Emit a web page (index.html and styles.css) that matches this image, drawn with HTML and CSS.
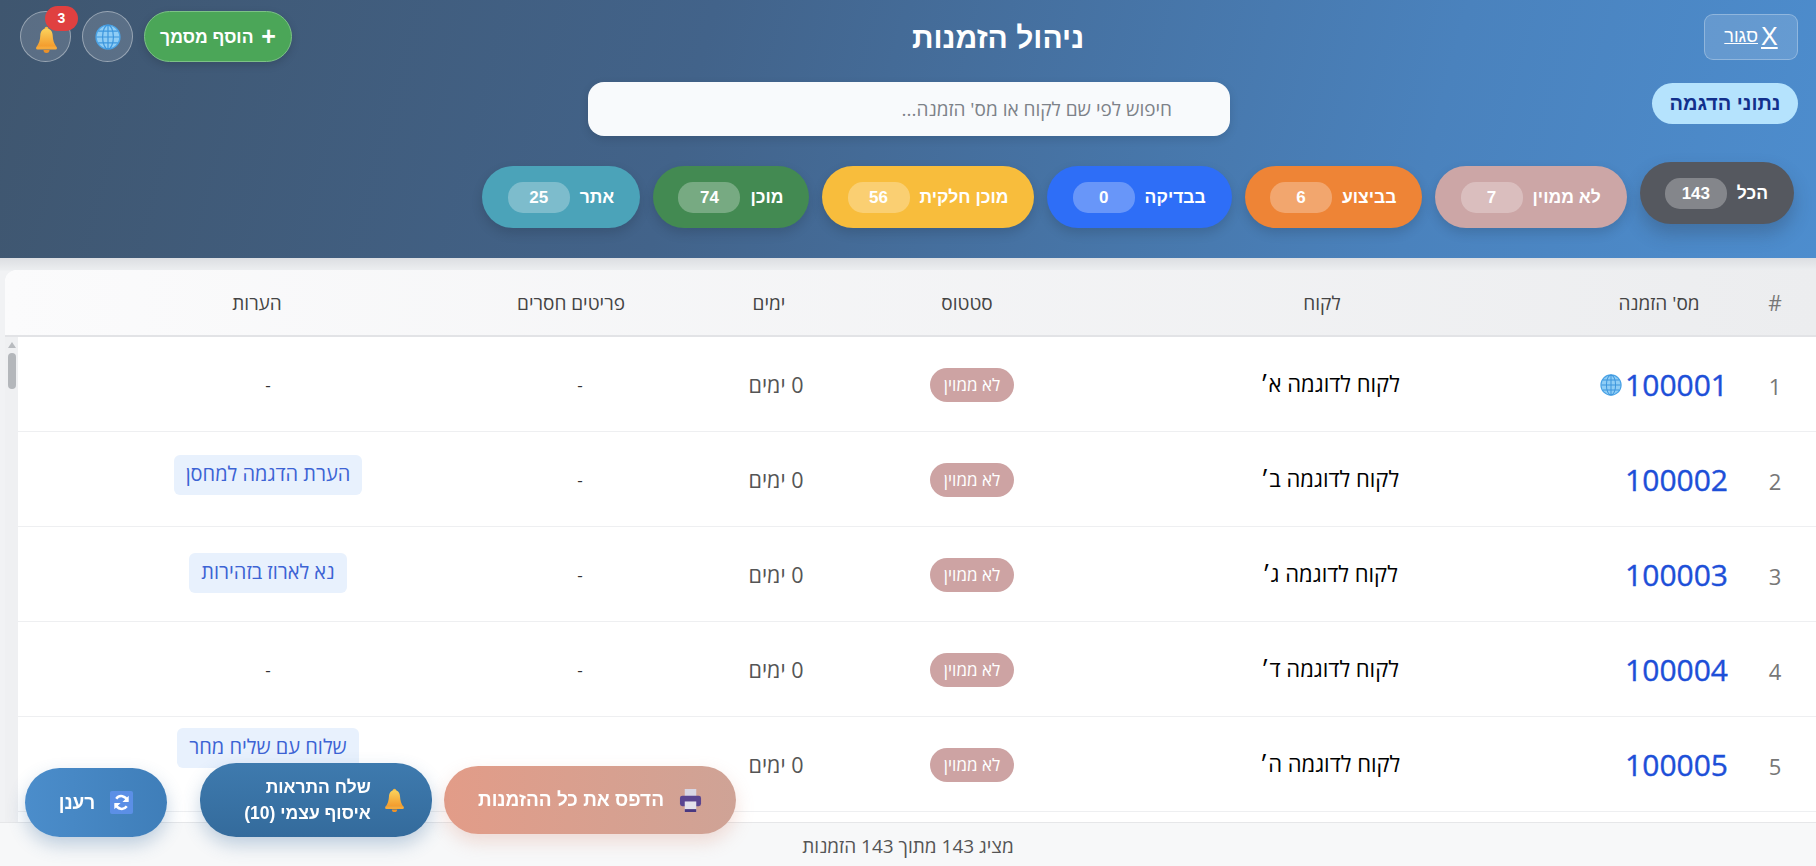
FILE: index.html
```html
<!DOCTYPE html>
<html lang="he" dir="rtl">
  <head>
    <meta charset="UTF-8" />
    <meta name="viewport" content="width=device-width, initial-scale=1.0" />
    <title>ניהול הזמנות</title>
    <link rel="stylesheet" href="styles.css">
  </head>
  <body>
    <svg class="defs" width="0" height="0">
      <defs>
        <linearGradient id="bellFill" x1="0" y1="0" x2="0" y2="1">
          <stop offset="0" stop-color="#fbd25c" />
          <stop offset="1" stop-color="#f39a2c" />
        </linearGradient>
        <symbol id="bell" viewBox="0 0 24 28">
          <circle cx="12" cy="2.6" r="1.9" fill="#f5b642" />
          <path d="M12 2.5c-4 0-6 3-6.2 7-.2 4.500-1.300 8-3.800 11.500h20c-2.500-3.500-3.600-7-3.800-11.500-.2-4-2.200-7-6.200-7z" fill="url(#bellFill)" />
          <rect x="1.500" y="20.500" width="21" height="3" rx="1.500" fill="#f6a93a" />
          <path d="M9 24h6a3 3 0 0 1-6 0z" fill="#ec9128" />
        </symbol>
        <symbol id="globe" viewBox="0 0 24 24">
          <circle cx="12" cy="12" r="11" fill="#8fcdf5" stroke="#4aa3e6" stroke-width="1.300" />
          <g fill="none" stroke="#3d96dd" stroke-width="1.100">
            <ellipse cx="12" cy="12" rx="5" ry="11" />
            <path d="M12 1v22M1.500 12h21M3 6.500h18M3 17.500h18" />
          </g>
        </symbol>
      </defs>
    </svg>

    <header class="top">
      <div class="top-row">
        <a class="close-link" href="#"><span class="close-x">X</span> סגור</a>
        <h1>ניהול הזמנות</h1>
        <div class="top-actions">
          <button class="add-btn"><span class="plus">+</span> הוסף מסמך</button>
          <button class="round-btn"><svg class="globe-big"><use href="#globe" /></svg></button>
          <button class="round-btn bell-btn">
            <svg class="bell-big"><use href="#bell" /></svg>
            <span class="badge">3</span>
          </button>
        </div>
      </div>

      <div class="search-row">
        <span class="demo-tag">נתוני הדגמה</span>
        <input class="search" type="text" placeholder="חיפוש לפי שם לקוח או מס' הזמנה..." />
      </div>

      <nav class="filters">
        <button class="chip chip-all">הכל <span class="count">143</span></button>
        <button class="chip chip-unsorted">לא ממוין <span class="count">7</span></button>
        <button class="chip chip-progress">בביצוע <span class="count">6</span></button>
        <button class="chip chip-review">בבדיקה <span class="count">0</span></button>
        <button class="chip chip-partial">מוכן חלקית <span class="count">56</span></button>
        <button class="chip chip-ready">מוכן <span class="count">74</span></button>
        <button class="chip chip-site">אתר <span class="count">25</span></button>
      </nav>
    </header>

    <main class="panel">
      <div class="card">
        <div class="head-row">
          <div class="c-num">#</div>
          <div>מס' הזמנה</div>
          <div>לקוח</div>
          <div>סטטוס</div>
          <div>ימים</div>
          <div>פריטים חסרים</div>
          <div class="c-notes">הערות</div>
        </div>

        <div class="body-wrap">
          <div class="rows">
            <article class="row">
              <div class="num">1</div>
              <div class="order">100001 <svg class="globe-small"><use href="#globe" /></svg></div>
              <div class="client">לקוח לדוגמה א׳</div>
              <div class="status-cell"><span class="status">לא ממוין</span></div>
              <div class="days">0 ימים</div>
              <div class="dash">-</div>
              <div class="c-notes dash">-</div>
            </article>
            <article class="row">
              <div class="num">2</div>
              <div class="order">100002</div>
              <div class="client">לקוח לדוגמה ב׳</div>
              <div class="status-cell"><span class="status">לא ממוין</span></div>
              <div class="days">0 ימים</div>
              <div class="dash">-</div>
              <div class="c-notes"><span class="note">הערת הדגמה למחסן</span></div>
            </article>
            <article class="row">
              <div class="num">3</div>
              <div class="order">100003</div>
              <div class="client">לקוח לדוגמה ג׳</div>
              <div class="status-cell"><span class="status">לא ממוין</span></div>
              <div class="days">0 ימים</div>
              <div class="dash">-</div>
              <div class="c-notes"><span class="note note-low">נא לארוז בזהירות</span></div>
            </article>
            <article class="row">
              <div class="num">4</div>
              <div class="order">100004</div>
              <div class="client">לקוח לדוגמה ד׳</div>
              <div class="status-cell"><span class="status">לא ממוין</span></div>
              <div class="days">0 ימים</div>
              <div class="dash">-</div>
              <div class="c-notes dash">-</div>
            </article>
            <article class="row">
              <div class="num">5</div>
              <div class="order">100005</div>
              <div class="client">לקוח לדוגמה ה׳</div>
              <div class="status-cell"><span class="status">לא ממוין</span></div>
              <div class="days">0 ימים</div>
              <div></div>
              <div class="c-notes"><span class="note note-high">שלוח עם שליח מחר</span></div>
            </article>
          </div>
          <div class="scrollbar">
            <span class="scroll-arrow"></span>
            <span class="scroll-thumb"></span>
          </div>
        </div>
      </div>
    </main>

    <footer class="count-bar">מציג 143 מתוך 143 הזמנות</footer>

    <div class="floating">
      <button class="fab fab-print">
        <svg class="fab-icon" viewBox="0 0 24 26">
          <rect x="6" y="1" width="12" height="8" fill="#d9d6e4" />
          <rect x="1" y="8" width="22" height="11" rx="2.500" fill="#5b4590" />
          <rect x="6" y="14" width="12" height="11" fill="#e4e1ec" />
          <rect x="6" y="22" width="12" height="3" fill="#4a3880" />
        </svg>
        הדפס את כל ההזמנות
      </button>
      <button class="fab fab-notify">
        <svg class="fab-icon"><use href="#bell" /></svg>
        <span class="fab-lines">שלח התראות<br />איסוף עצמי (10)</span>
      </button>
      <button class="fab fab-refresh">
        <svg class="fab-icon" viewBox="0 0 24 24">
          <rect width="24" height="24" rx="2" fill="#5b8fe6" />
          <g fill="none" stroke="#fff" stroke-width="2.600">
            <path d="M18 10a6.500 6.500 0 0 0-11.500-2" />
            <path d="M6 14a6.500 6.500 0 0 0 11.500 2" />
          </g>
          <path d="M19.500 5v6.500h-6.500z M4.500 19v-6.500h6.500z" fill="#fff" />
        </svg>
        רענן
      </button>
    </div>
  </body>
</html>
```

FILE: styles.css
```css
* {
  box-sizing: border-box;
}

html,
body {
  height: 100%;
}

body {
  margin: 0;
  height: 100vh;
  overflow: hidden;
  display: flex;
  flex-direction: column;
  font-family: "Open Sans", "Liberation Sans", sans-serif;
  background-color: #f1f2f4;
  color: #333;
}

button {
  font-family: inherit;
  border: none;
  cursor: pointer;
}

.defs {
  position: absolute;
}

/* header */
.top {
  height: 258px;
  flex-shrink: 0;
  padding: 11px 18px 0 20px;
  background: linear-gradient(105deg, #3f566f 0%, #42638a 38%, #4a82bd 78%, #4d8dce 100%);
  font-family: "Liberation Sans", sans-serif;
}

.top-row {
  display: flex;
  justify-content: space-between;
  align-items: center;
  height: 51px;
}

.close-link {
  width: 94px;
  height: 46px;
  display: flex;
  align-items: center;
  justify-content: center;
  gap: 3px;
  color: #fff;
  font-size: 18px;
  background-color: rgba(255, 255, 255, 0.14);
  border: 1px solid rgba(255, 255, 255, 0.28);
  border-radius: 9px;
}

.close-x {
  font-size: 25px;
  line-height: 23px;
}

h1 {
  margin: 0;
  padding-top: 3px;
  color: #fff;
  font-size: 30px;
  font-weight: 700;
}

.top-actions {
  display: flex;
  align-items: center;
  gap: 11px;
}

.add-btn {
  width: 148px;
  height: 51px;
  padding-top: 2px;
  color: #fff;
  font-size: 17.5px;
  font-weight: 700;
  background-color: #4ba658;
  border: 1px solid #7cc286;
  border-radius: 26px;
  box-shadow: 0 3px 8px rgba(0, 0, 0, 0.15);
}

.plus {
  font-size: 25px;
  line-height: 18px;
  vertical-align: -2px;
  margin-left: 3px;
}

.round-btn {
  position: relative;
  width: 51px;
  height: 51px;
  padding: 0;
  display: flex;
  align-items: center;
  justify-content: center;
  background-color: rgba(255, 255, 255, 0.14);
  border: 1px solid rgba(255, 255, 255, 0.38);
  border-radius: 50%;
}

.globe-big {
  width: 26px;
  height: 26px;
}

.bell-big {
  width: 25px;
  height: 28px;
  margin-top: 7px;
  margin-right: -1px;
}

.badge {
  position: absolute;
  top: -6px;
  left: 24px;
  width: 33px;
  height: 25px;
  line-height: 25px;
  text-align: center;
  color: #fff;
  font-size: 14px;
  font-weight: 700;
  background-color: #e04040;
  border-radius: 13px;
}

.search-row {
  display: grid;
  grid-template-columns: 1fr 642px 1fr;
  margin-top: 20px;
}

.search-row .demo-tag {
  grid-column: 1;
  justify-self: start;
  align-self: start;
  margin-top: 1px;
  width: 146px;
  height: 41px;
  line-height: 41px;
  text-align: center;
  color: #12308c;
  font-size: 20px;
  font-weight: 700;
  background-color: #b5e3fd;
  border-radius: 21px;
}

.search {
  grid-column: 2;
  height: 54px;
  padding: 0 58px;
  border: none;
  border-radius: 16px;
  background-color: #f8fafc;
  font-family: "Open Sans", "Liberation Sans", sans-serif;
  font-size: 19px;
  box-shadow: 0 3px 10px rgba(0, 0, 0, 0.12);
}

.search::placeholder {
  color: #7d8289;
}

.filters {
  display: flex;
  align-items: flex-start;
  gap: 13px;
  margin: 26px 4px 0 0;
}

.chip {
  height: 62px;
  margin-top: 4px;
  padding: 0 26px 0 25.2px;
  display: flex;
  align-items: center;
  gap: 10px;
  color: #fff;
  font-size: 17.5px;
  font-weight: 700;
  white-space: nowrap;
  border-radius: 31px;
  box-shadow: 0 5px 12px rgba(0, 0, 0, 0.14);
}

.count {
  width: 62px;
  height: 31px;
  line-height: 31px;
  text-align: center;
  font-size: 17px;
  background-color: rgba(255, 255, 255, 0.28);
  border-radius: 15px;
}

.chip-all {
  margin-top: 0;
  background-color: #55585f;
  box-shadow: 0 10px 18px rgba(40, 50, 70, 0.28);
}

.chip-unsorted {
  background-color: #cca6a6;
}

.chip-progress {
  background-color: #ee8436;
}

.chip-review {
  background-color: #2e6ef7;
}

.chip-partial {
  background-color: #f8bd3c;
}

.chip-ready {
  background-color: #438a52;
}

.chip-site {
  background-color: #4ba3b9;
}

/* table */
.panel {
  flex: 1;
  min-height: 0;
  padding: 12px 0 0 5px;
  background: linear-gradient(#dcdee2, #eceef0 12px, #f1f2f4 13px);
}

.card {
  height: 100%;
  display: flex;
  flex-direction: column;
  overflow: hidden;
  background-color: #fff;
  border-radius: 12px 0 0 0;
}

.head-row {
  flex-shrink: 0;
  height: 67px;
  display: grid;
  grid-template-columns: 82px 150px 524px 186px 210px 186px 473px;
  align-items: center;
  text-align: center;
  color: #444;
  font-size: 19px;
  background: linear-gradient(270deg, #ecedef, #fbfbfc);
  border-bottom: 2px solid #e2e3e6;
}

.head-row .c-num {
  color: #777;
  font-size: 21px;
}

.head-row .c-notes {
  padding-left: 31px;
}

.body-wrap {
  flex: 1;
  min-height: 0;
  display: flex;
}

.rows {
  flex: 1;
  min-width: 0;
  overflow: hidden;
}

.row {
  height: 95px;
  display: grid;
  grid-template-columns: 82px 150px 508px 208px 184px 208px 458px;
  align-items: center;
  text-align: center;
  border-bottom: 1px solid #eeeff1;
}

.row .c-notes {
  padding-left: 42px;
}

.num {
  color: #777;
  font-size: 22px;
  padding-top: 3px;
}

.order {
  display: flex;
  align-items: center;
  gap: 3px;
  padding-top: 1px;
  padding-right: 6px;
  color: #1d4fd8;
  font-size: 30px;
  -webkit-text-stroke: 0.4px #1d4fd8;
}

.globe-small {
  width: 22px;
  height: 22px;
}

.client {
  color: #000;
  font-size: 22px;
  font-weight: 500;
  padding-bottom: 3px;
}

.status-cell {
  padding-top: 2px;
}

.status {
  display: inline-block;
  width: 84px;
  height: 34px;
  line-height: 33px;
  color: #fff;
  font-size: 17px;
  background-color: #cda3a3;
  border-radius: 17px;
}

.days {
  color: #555;
  font-size: 21.5px;
}

.dash {
  color: #333;
  font-size: 17px;
}

.note {
  display: inline-block;
  height: 40px;
  line-height: 38px;
  margin-bottom: 8px;
  padding: 0 12px;
  color: #3c63d4;
  font-size: 20px;
  background-color: #e8f1fd;
  border-radius: 6px;
}

.note-low {
  margin-bottom: 2px;
}

.note-high {
  margin-bottom: 33px;
}

.scrollbar {
  flex-shrink: 0;
  width: 13px;
  padding-top: 5px;
  display: flex;
  flex-direction: column;
  align-items: center;
  gap: 5px;
  background-color: #eff0f2;
}

.scroll-arrow {
  border: 4px solid transparent;
  border-top: none;
  border-bottom: 6px solid #b8bbbf;
}

.scroll-thumb {
  width: 8px;
  height: 36px;
  background-color: #b4b7bb;
  border-radius: 4px;
}

.count-bar {
  flex-shrink: 0;
  height: 44px;
  line-height: 46px;
  text-align: center;
  color: #555;
  font-size: 19px;
  background-color: #f7f8f9;
  border-top: 1px solid #e6e7e9;
}

/* floating buttons */
.floating {
  position: fixed;
  left: 25px;
  bottom: 29px;
  display: flex;
  align-items: flex-end;
  gap: 12px;
  font-family: "Liberation Sans", sans-serif;
}

.fab {
  display: flex;
  align-items: center;
  justify-content: center;
  gap: 15px;
  color: #fff;
  font-size: 19px;
  font-weight: 700;
  border-radius: 36px;
  box-shadow: 0 8px 18px rgba(60, 110, 160, 0.3);
}

.fab-print {
  width: 292px;
  height: 68px;
  margin-bottom: 3px;
  background: linear-gradient(270deg, #cfa396, #e29c88);
  box-shadow: 0 8px 18px rgba(220, 150, 130, 0.3);
}

.fab-notify {
  width: 232px;
  height: 74px;
  padding-left: 24px;
  background: linear-gradient(#3e7aae, #346b9c);
  gap: 12px;
}

.fab-lines {
  line-height: 26px;
  text-align: right;
  font-size: 17.5px;
}

.fab-refresh {
  width: 142px;
  height: 69px;
  margin-right: 21px;
  background: linear-gradient(270deg, #3f7eb9, #4b8dcb);
}

.fab-icon {
  width: 23px;
  height: 25px;
  flex-shrink: 0;
}
```
